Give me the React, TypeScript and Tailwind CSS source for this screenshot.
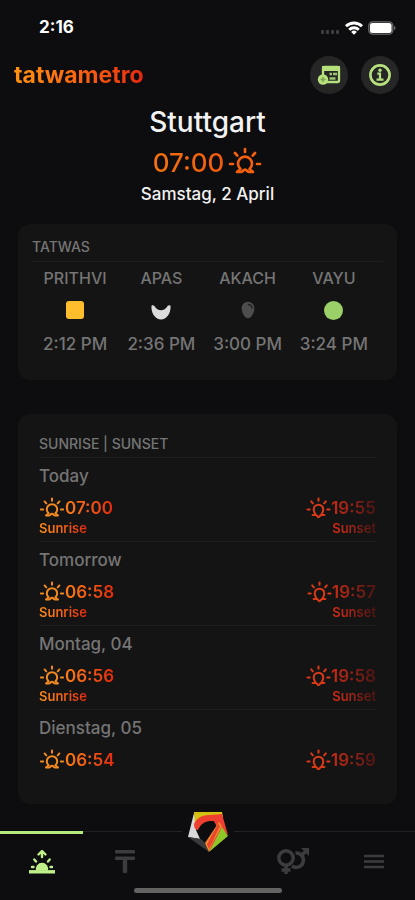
import React from "react";

interface Tatwa {
  name: string;
  time: string;
  icon: React.ReactNode;
}

interface SunDay {
  day: string;
  sunrise: string;
  sunset: string;
  labels: boolean;
}

const tatwas: Tatwa[] = [
  { name: "PRITHVI", time: "2:12 PM", icon: <span className="size-[18px] rounded-[3px] bg-[#fdbd2c]" /> },
  {
    name: "APAS",
    time: "2:36 PM",
    icon: (
      <svg width="20" height="20" viewBox="0 0 20 20" fill="#dcdcdc" aria-hidden="true">
        <path d="M.4 6.500C.4 5 2.200 4.800 3.200 5.800c3.600 6 10 6 13.600 0 1-1 2.800-.8 2.800.7C19.600 14 15.400 19.400 10 19.400S.4 14 .4 6.500Z" />
      </svg>
    ),
  },
  {
    name: "AKACH",
    time: "3:00 PM",
    icon: (
      <svg width="14" height="18" viewBox="0 0 14 18" aria-hidden="true">
        <path d="M7 1c4 0 6.300 2.600 6.300 6.200C13.300 12 10.300 17.200 7 17.200S.7 12 .7 7.200C.7 3.600 3 1 7 1Z" fill="#4d4d4d" />
        <path d="M7.500 3.500c2 .2 3.300 1.500 3.500 3.600" fill="none" stroke="#222" strokeWidth="1.500" strokeLinecap="round" />
      </svg>
    ),
  },
  { name: "VAYU", time: "3:24 PM", icon: <span className="size-[19px] rounded-full bg-[#9bd068]" /> },
];

const days: SunDay[] = [
  { day: "Today", sunrise: "07:00", sunset: "19:55", labels: true },
  { day: "Tomorrow", sunrise: "06:58", sunset: "19:57", labels: true },
  { day: "Montag, 04", sunrise: "06:56", sunset: "19:58", labels: true },
  { day: "Dienstag, 05", sunrise: "06:54", sunset: "19:59", labels: false },
];

const RAYS = "M17 2v3M7 6l2.300 2.600M27 6l-2.300 2.600M2 17h3M29 17h3";

const SunriseIcon = ({ className }: { className: string }) => (
  <svg className={className} viewBox="0 0 34 27" fill="none" stroke="currentColor" strokeWidth="2.700" strokeLinecap="round" strokeLinejoin="round" aria-hidden="true">
    <path d={RAYS} />
    <path d="M9 25h4c1.500 0 2.200-2.300 4-2.300s2.500 2.300 4 2.300h4" />
    <path d="M9.500 24.500l3-2.500a7 7 0 1 1 9 0l3 2.500" />
  </svg>
);

const SunsetIcon = ({ className }: { className: string }) => (
  <svg className={className} viewBox="0 0 34 30" fill="none" stroke="currentColor" strokeWidth="2.800" strokeLinecap="round" strokeLinejoin="round" aria-hidden="true">
    <path d={RAYS} />
    <path d="M9 24.500h4.500c1.200 0 1.800 3 3.500 3s2.300-3 3.500-3H25" />
    <path d="M12.800 23.500c-1-1.600-2.300-3.500-2.300-6.500a6.500 6.500 0 0 1 13 0c0 3-1.300 4.900-2.300 6.500" />
  </svg>
);

const StatusBar = () => (
  <div className="flex h-[54px] items-center justify-between pt-[2px] pr-[19px] pl-[39px]">
    <span className="text-[17px] font-bold">2:16</span>
    <div className="flex items-center">
      <svg width="18" height="5" viewBox="0 0 18 5" fill="#3e3e40" className="mt-2 mr-[6px]" aria-hidden="true">
        <rect width="3" height="4" rx="1" />
        <rect x="5" width="3" height="4" rx="1" />
        <rect x="10" width="3" height="4" rx="1" />
        <rect x="15" width="3" height="4" rx="1" />
      </svg>
      <svg width="18" height="14" viewBox="0 0 18 14" fill="none" stroke="#fff" strokeWidth="2.900" className="mr-[5px]" aria-hidden="true">
        <path d="M1 5.300a11.500 11.500 0 0 1 16 0" />
        <path d="M4.200 8.700a7 7 0 0 1 9.600 0" />
        <path d="M9 13.800 6.200 10.900a4 4 0 0 1 5.600 0Z" fill="#fff" stroke="none" />
      </svg>
      <svg width="28" height="14" viewBox="0 0 28 14" aria-hidden="true">
        <rect x=".8" y=".8" width="24" height="12.400" rx="4" fill="none" stroke="#6b6b6d" strokeWidth="1.300" />
        <rect x="2" y="2" width="21.600" height="10" rx="2.500" fill="#fff" />
        <path d="M26 5v4c1-.3 1.500-1 1.500-2S27 5.300 26 5Z" fill="#6b6b6d" />
      </svg>
    </div>
  </div>
);

const Header = () => (
  <header className="flex h-[42px] items-center justify-between pr-4 pl-[14px]">
    <h1 className="bg-linear-to-r from-[#ff9210] via-[#fb640f] to-[#e6260f] bg-clip-text text-[23px] leading-7 font-bold text-transparent">
      tatwametro
    </h1>
    <div className="flex gap-[13px]">
      <button type="button" aria-label="Add to calendar" className="flex size-[38px] items-center justify-center rounded-full bg-[#262627]">
        <svg width="24" height="20" viewBox="0 0 24 20" aria-hidden="true">
          <rect x="6" y="2" width="16" height="15" rx="1.500" fill="none" stroke="#b5e07c" strokeWidth="2.300" />
          <path d="M5 1h18v5H5Z" fill="#b5e07c" />
          <path d="M12.500 9h2.500M16 9h4M12.500 13.500h6" stroke="#9cc56c" strokeWidth="2.600" />
          <circle cx="6" cy="14.500" r="5.200" fill="#b5e07c" />
          <path d="M6 12v5M3.500 14.500h5" stroke="#7d9f56" strokeWidth="1.500" />
        </svg>
      </button>
      <button type="button" aria-label="Info" className="flex size-[38px] items-center justify-center rounded-full bg-[#262627]">
        <svg width="22" height="22" viewBox="0 0 22 22" fill="none" stroke="#b5e07c" aria-hidden="true">
          <circle cx="11" cy="11" r="9.600" strokeWidth="2.600" />
          <path d="M8.300 9.700H11v5.500M7.500 15.700h7" strokeWidth="2.200" />
          <circle cx="11" cy="6.300" r="1.700" fill="#b5e07c" stroke="none" />
        </svg>
      </button>
    </div>
  </header>
);

const TatwasCard = () => (
  <section className="mx-[18px] h-[156px] rounded-xl bg-[#141414] px-[14px] pt-[13px] text-[#757575]">
    <h3 className="border-b border-[#1e1e1e] pb-1 text-sm font-medium">TATWAS</h3>
    <div className="mr-[6px] grid grid-cols-4 pt-[6px] text-center">
      {tatwas.map((t) => (
        <div key={t.name} className="flex flex-col items-center whitespace-nowrap">
          <span className="text-base leading-5 font-medium">{t.name}</span>
          <span className="flex h-11 items-center">{t.icon}</span>
          <span className="text-[17px] leading-6 font-medium">{t.time}</span>
        </div>
      ))}
    </div>
  </section>
);

const DayRow = ({ day, sunrise, sunset, labels }: SunDay) => (
  <li className="h-[84px] border-[#1e1e1e] pt-[6px] not-last:border-b">
    <h4 className="text-[17px] leading-6 font-medium text-[#757575]">{day}</h4>
    <div className="flex justify-between pt-2 font-semibold">
      <div>
        <p className="flex items-center text-[#f28a20]">
          <SunriseIcon className="mb-[2px] h-[20px] w-[26px]" />
          <span className="bg-linear-to-r from-[#f97c16] to-[#e6260f] bg-clip-text text-[17px] leading-6 text-transparent">{sunrise}</span>
        </p>
        {labels && (
          <p className="w-fit bg-linear-to-r from-[#fb8c19] to-[#e6260f] bg-clip-text text-[13px] leading-4 text-transparent">Sunrise</p>
        )}
      </div>
      <div className="flex flex-col items-end">
        <p className="flex items-center text-[#d83a18]">
          <SunsetIcon className="h-[22px] w-[25px]" />
          <span className="bg-linear-to-r from-[#cc2b14] to-[#4d1512] bg-clip-text text-[17px] leading-6 text-transparent">{sunset}</span>
        </p>
        {labels && (
          <p className="bg-linear-to-r from-[#e02c13] to-[#4d1512] bg-clip-text text-[13px] leading-4 text-transparent">Sunset</p>
        )}
      </div>
    </div>
  </li>
);

const TabBar = () => (
  <nav className="relative mt-auto h-[69px]">
    <div className="flex h-[3px]">
      <span className="w-1/5 bg-[#b5ea7c]" />
      <span className="h-px flex-1 bg-[#222224]" />
      <span className="w-[52px]" />
      <span className="h-px w-[181px] bg-[#222224]" />
    </div>
    <div className="grid h-[54px] grid-cols-5 text-[#3c3c3e]">
      <button type="button" aria-label="Sun times" className="flex items-center justify-center">
        <svg width="28" height="25" viewBox="0 0 28 25" fill="none" stroke="#c0f08a" strokeWidth="2.400" strokeLinecap="round" strokeLinejoin="round" aria-hidden="true">
          <path d="M14 8V2.500M10.500 5.500 14 2l3.500 3.500" />
          <path d="m6.300 10.500 1.700 2M21.700 10.500l-1.700 2M4 18h1.500M22.500 18H24" />
          <path d="M8 21.500a6.200 6.200 0 1 1 12 0Z" fill="#c0f08a" stroke="none" />
          <path d="M1 22.800h26" strokeWidth="3.400" strokeLinecap="butt" />
        </svg>
      </button>
      <button type="button" aria-label="Tatwas" className="flex items-center justify-center">
        <svg width="20" height="23" viewBox="0 0 20 23" fill="currentColor" aria-hidden="true">
          <rect width="20" height="3.500" rx="1" />
          <rect y="6.500" width="20" height="3.500" rx="1" />
          <rect x="7.800" y="8" width="4.400" height="15" rx="1" />
        </svg>
      </button>
      <button type="button" aria-label="Home" className="relative">
        <svg width="42" height="44" viewBox="0 0 42 44" className="absolute -top-6 left-1/2 -translate-x-1/2" aria-hidden="true">
          <path d="M7 3 1 27l12 2-4-9 1-9Z" fill="#d9d9d9" />
          <path d="m1 27 13 2 8 8v5Z" fill="#3a3a3c" />
          <path d="M7 2h28l1 5H16l-8 6Z" fill="#d3c211" />
          <path d="M7 14c2-5 7-9 15-9l13-1 6 21-7-7-1-6c-9-2-18-2-22 8-3 0-4-3-4-6Z" fill="#ee3f30" />
          <path d="m27 11 8-1 2 6-14 25-1-7 8-17Z" fill="#f03f30" />
          <path d="M32 12 18 33l4 9 3-8 10-18Z" fill="#f58a2c" />
          <path d="m31 14-11 20 2 5 11-23Z" fill="#e9452c" />
          <path d="m35 17 6 9-19 16Z" fill="#8fc62a" />
        </svg>
      </button>
      <button type="button" aria-label="Compatibility" className="flex items-center justify-center pl-1">
        <svg width="34" height="28" viewBox="0 0 34 28" fill="none" stroke="currentColor" strokeWidth="3.500" aria-hidden="true">
          <circle cx="10" cy="11" r="7.200" />
          <path d="M10 18v9M5.500 23h9" />
          <path d="M19.500 6a7.200 7.200 0 1 1-3.500 13M26 8l4-4" />
          <path d="M25 1h8v8Z" fill="currentColor" stroke="none" />
        </svg>
      </button>
      <button type="button" aria-label="Menu" className="flex items-center justify-center">
        <svg width="20" height="15" viewBox="0 0 20 15" stroke="currentColor" strokeWidth="2.500" aria-hidden="true">
          <path d="M0 2h20M0 7.500h20M0 13h20" />
        </svg>
      </button>
    </div>
    <div className="mx-auto h-[5px] w-[148px] rounded-full bg-[#636364]" />
  </nav>
);

const App: React.FC = () => {
  return (
    <div className="flex min-h-screen flex-col bg-[#0d0d0f] font-['Inter',sans-serif] text-white">
      <StatusBar />
      <Header />
      <main>
        <div className="flex flex-col items-center pt-2 text-[#f2f2f2]">
          <h2 className="text-[28px] leading-9 font-medium">Stuttgart</h2>
          <p className="flex h-11 items-center gap-1 text-[#f4600f]">
            <span className="bg-linear-to-r from-[#f4720f] to-[#f25a0f] bg-clip-text text-[26px] font-medium text-transparent">07:00</span>
            <SunriseIcon className="mb-[3px] h-[27px] w-[34px]" />
          </p>
          <p className="text-[17px] leading-5 font-medium">Samstag, 2 April</p>
        </div>
        <div className="flex flex-col gap-[34px] pt-5">
          <TatwasCard />
          <section className="mx-[18px] h-[390px] rounded-xl bg-[#141414] px-[21px] pt-5">
            <h3 className="border-b border-[#1e1e1e] pb-[3px] text-sm font-medium text-[#757575]">SUNRISE | SUNSET</h3>
            <ul>
              {days.map((d) => (
                <DayRow key={d.day} {...d} />
              ))}
            </ul>
          </section>
        </div>
      </main>
      <TabBar />
    </div>
  );
};

export default App;
